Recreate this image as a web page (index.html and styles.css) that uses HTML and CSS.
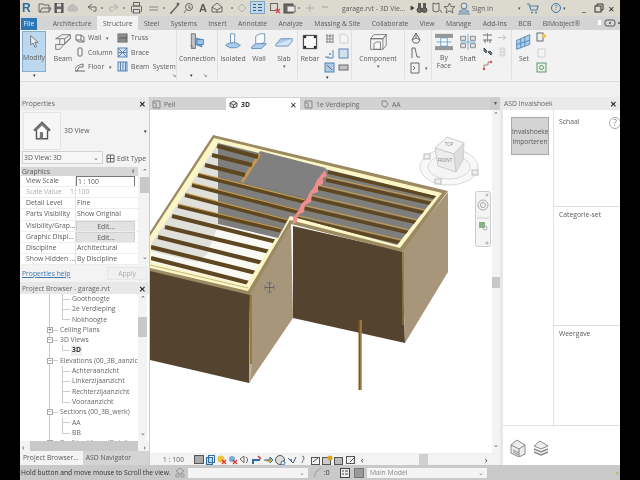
FILE: index.html
```html
<!DOCTYPE html>
<html lang="nl">
<head>
    <meta charset="UTF-8">
    <title>garage.rvt - 3D View</title>
    <link rel="stylesheet" href="styles.css">
</head>
<body>
    <div class="app">
        <!-- title bar -->
        <div class="titlebar">
            <span class="logo">R</span>
            <svg class="qat" width="306" height="16" viewBox="34 0 306 16">
                <path d="M39 4h4l1 1h5v7H39zM40 12l2-4h9l-2 4" class="i-line"/>
                <rect x="55" y="3.500" width="8" height="9" class="i-dark"/><rect x="57" y="3.500" width="4" height="3" fill="#ddd"/><rect x="57" y="9" width="4" height="3.500" fill="#ddd"/>
                <path d="M69 11a3 3 0 0 1 1-5 3.500 3.500 0 0 1 6 1c2 0 2 4 0 4z" class="i-soft"/>
                <path d="M92 4l-4 3 4 3M88 7h8v4h-3" class="i-line"/><circle cx="102" cy="8" r="1" fill="#777"/>
                <path d="M114 4l4 3-4 3M118 7h-8v4h3" class="i-soft-line"/><circle cx="124" cy="8" r="1" fill="#777"/>
                <rect x="131.500" y="6" width="10" height="6" rx="1" class="i-line"/><rect x="133.500" y="2.500" width="6" height="3.500" class="i-line"/><rect x="133.500" y="9.500" width="6" height="3.500" fill="#ddd" stroke="#555"/>
                <path d="M149 7h9M149 10h9" stroke="#999" stroke-width="1.400"/><circle cx="164" cy="8" r="1" fill="#777"/>
                <path d="M171 13l7-8" stroke="#555" stroke-width="1.500"/><circle cx="178" cy="4" r="1.500" fill="#555"/><circle cx="171" cy="13" r="1" fill="#555"/>
                <circle cx="189" cy="7" r="3.500" class="i-line"/><path d="M186 10l-2 3" class="i-line"/><path d="M189 5v3h2" class="i-line"/>
                <text class="qat-a" x="199" y="12">A</text>
                <path d="M212 7l5-4 5 4v5h-10z" class="i-line"/><path d="M212 7l5 3 5-3M217 10v3" class="i-line"/>
                <circle cx="232" cy="8" r="1" fill="#777"/>
                <path d="M242 4l4 4-4 4-4-4z" class="i-soft-line"/>
                <rect x="250.500" y="1.500" width="14" height="12" fill="#bcd8ef" stroke="#6a9cc8"/><path d="M253 4.500h3M253 7.500h3M253 10.500h3M258 4.500h4M258 7.500h4M258 10.500h4" stroke="#246"/>
                <rect x="270.500" y="3.500" width="7" height="7" class="i-line"/><path d="M276 9l4 4M280 9l-4 4" stroke="#d33" stroke-width="1.400"/>
                <rect x="284" y="4" width="9" height="9" class="i-dark"/><rect x="287" y="6" width="8" height="6" fill="#eee" stroke="#555"/>
                <circle cx="299" cy="8" r="1" fill="#777"/>
                <path d="M306 8h8M310 4v8" class="i-soft-line"/>
                <path d="M322 7h6" stroke="#999"/>
            </svg>
            <span class="title-text">garage.rvt - 3D Vie...</span>
            <svg class="qat" width="63" height="16" viewBox="409 0 63 16">
                <path d="M414 8l-3 2-0-4z" fill="#333" stroke="#333"/>
                <circle cx="419.500" cy="10" r="2.500" class="i-dark"/><circle cx="424.500" cy="10" r="2.500" class="i-dark"/><rect x="418" y="3" width="3" height="6" fill="#444"/><rect x="423" y="3" width="3" height="6" fill="#444"/>
                <path d="M433 3l3 1 3-1v8l-3 1-3-1zM440 10l2 3" class="i-line"/>
                <path d="M449.500 3l1.600 3.600h3.900l-3 2.600 1 3.800-3.500-2.200-3.500 2.200 1-3.800-3-2.600h3.900z" class="i-line"/>
                <circle cx="464" cy="6" r="3" fill="none" stroke="#3f72a8"/><path d="M459 12c1-3 9-3 10 0zM458 14h12" fill="none" stroke="#3f72a8"/>
            </svg>
            <span class="sign-in">Sign In</span>
            <span class="dot">▾</span>
            <svg class="qat" width="14" height="14" viewBox="0 0 14 14"><path d="M1 3h2l2 6h6l1-4H4" fill="none" stroke="#3f72a8" stroke-width="1.200"/><circle cx="6" cy="11.500" r="1" fill="#3f72a8"/><circle cx="10" cy="11.500" r="1" fill="#3f72a8"/></svg>
            <span class="help-round">?</span>
            <span class="dot">▾</span>
            <span class="win-btn">_</span>
            <svg class="restore" width="10" height="10" viewBox="0 0 10 10"><rect x="1" y="3" width="6" height="6" fill="none" stroke="#333"/><path d="M3 3V1h6v6H7" fill="none" stroke="#333"/></svg>
            <span class="win-x">✕</span>
        </div>

        <!-- ribbon tabs -->
        <div class="tabs">
            <span class="tab file">File</span>
            <span class="tab">Architecture</span>
            <span class="tab active">Structure</span>
            <span class="tab">Steel</span>
            <span class="tab">Systems</span>
            <span class="tab">Insert</span>
            <span class="tab">Annotate</span>
            <span class="tab">Analyze</span>
            <span class="tab">Massing &amp; Site</span>
            <span class="tab">Collaborate</span>
            <span class="tab">View</span>
            <span class="tab">Manage</span>
            <span class="tab">Add-Ins</span>
            <span class="tab">BCB</span>
            <span class="tab">BIMobject®</span>
            <svg class="tab-end" width="30" height="10" viewBox="0 0 30 10"><rect x="8" y="2" width="3" height="5" fill="#fff"/><rect x="15" y="2" width="10" height="6" rx="2" fill="none" stroke="#555"/><circle cx="20" cy="5" r="1" fill="#555"/><circle cx="29" cy="5" r="1" fill="#555"/></svg>
        </div>

        <!-- ribbon -->
        <div class="ribbon">
            <div class="panel p-modify">
                <div class="big modify">
                    <svg width="16" height="18" viewBox="0 0 16 18"><path d="M4 2v11l3-2 2 5 2-1-2-5h4z" fill="#eef4fa" stroke="#555"/></svg>
                    <span>Modify</span>
                </div>
                <span class="caret">▾</span>
            </div>
            <div class="panel p-structure">
                <div class="big w24">
                    <svg width="22" height="22" viewBox="0 0 22 22"><path d="M2 7l8-5h10l-7 5zM7 7v7M2 14h10l-5 6H2zM13 7v7l7-7V2M12 14l8-8" fill="#eaeaea" stroke="#555"/></svg>
                    <span>Beam</span>
                </div>
                <div class="small-col c-wall">
                    <div class="small"><svg width="10" height="10" viewBox="0 0 10 10"><path d="M1 2l5 0 3 2v5l-5 0-3-2z M6 2v5l-5 0M6 7l3 2" fill="#fff" stroke="#555"/></svg>Wall<i>▾</i></div>
                    <div class="small"><svg width="10" height="10" viewBox="0 0 10 10"><rect x="3" y="1" width="4" height="8" rx="1" fill="#fff" stroke="#555"/></svg>Column</div>
                    <div class="small"><svg width="10" height="10" viewBox="0 0 10 10"><path d="M0 9c0-4 3-6 8-7v3H4L2 9zM1 9h9" fill="#fff" stroke="#555"/></svg>Floor<i>▾</i></div>
                </div>
                <div class="small-col">
                    <div class="small"><svg width="11" height="10" viewBox="0 0 11 10"><rect x="1" y="1" width="9" height="8" fill="#aaa" stroke="#444"/><path d="M3 2v6M5 2v6M7 2v6M9 2v6M2 5h8" stroke="#333" stroke-width=".8"/></svg>Truss</div>
                    <div class="small"><svg width="11" height="11" viewBox="0 0 11 11"><rect x="1" y="1" width="9" height="9" fill="#cfe0ef" stroke="#3f72a8"/><path d="M1 1l9 9M10 1L1 10M1 5.500h9" stroke="#3f72a8"/></svg>Brace</div>
                    <div class="small"><svg width="11" height="11" viewBox="0 0 11 11"><rect x="1" y="1" width="9" height="9" fill="#cfe0ef" stroke="#3f72a8"/><path d="M3.500 1v9M6 1v9M8.500 1v9" stroke="#3f72a8"/></svg>Beam&nbsp; System</div>
                </div>
                <span class="corner">↘</span>
            </div>
            <div class="panel p-connection">
                <div class="big">
                    <svg width="22" height="22" viewBox="0 0 22 22"><rect x="4" y="1" width="5" height="18" fill="#bbb" stroke="#555"/><path d="M9 6l8 2v9l-8-3z" fill="#5b9fd4" stroke="#2f6da3"/><path d="M11 8h8v6h-8z" fill="#8abde6" stroke="#2f6da3"/><path d="M3 15l4 3" stroke="#555"/></svg>
                    <span>Connection</span>
                </div>
                <div class="caret-row"><span class="caret">▾</span><span class="corner-in">↘</span></div>
            </div>
            <div class="panel p-found">
                <div class="big w28">
                    <svg width="22" height="22" viewBox="0 0 22 22"><path d="M8 1h5v12H8z" fill="#fff" stroke="#3f72a8"/><path d="M2 15l5-3h8l5 3-5 3H7z" fill="#9cc7ea" stroke="#3f72a8"/></svg>
                    <span>Isolated</span>
                </div>
                <div class="big w22">
                    <svg width="22" height="22" viewBox="0 0 22 22"><path d="M7 4l5-3h6v10l-6 3H7z" fill="#fff" stroke="#3f72a8"/><path d="M2 17l5-4h13l-6 6H2z" fill="#9cc7ea" stroke="#3f72a8"/></svg>
                    <span>Wall</span>
                </div>
                <div class="big w26">
                    <svg width="22" height="22" viewBox="0 0 22 22"><path d="M1 14l6-7h14l-5 7z" fill="#9cc7ea" stroke="#3f72a8"/><path d="M1 14v2h15l5-6V7" fill="#cfe3f4" stroke="#3f72a8"/></svg>
                    <span>Slab</span>
                    <i class="under">▾</i>
                </div>
            </div>
            <div class="panel p-rebar">
                <div class="big w24">
                    <svg width="22" height="22" viewBox="0 0 22 22"><rect x="3" y="3" width="16" height="16" fill="#fff" stroke="#333" stroke-width="1.500"/><circle cx="5" cy="5" r="1.500"/><circle cx="17" cy="5" r="1.500"/><circle cx="5" cy="17" r="1.500"/><circle cx="17" cy="17" r="1.500"/></svg>
                    <span>Rebar</span>
                </div>
                <div class="icon-grid">
                    <svg width="11" height="11" viewBox="0 0 11 11"><path d="M2 3h7M2 6h7M2 9h7M3 1v9M6 1v9M9 1v9" stroke="#777"/></svg>
                    <svg width="11" height="11" viewBox="0 0 11 11"><path d="M2 1h5l3 3v6H2z" fill="#f5f5f5" stroke="#ccc"/></svg>
                    <svg width="11" height="11" viewBox="0 0 11 11"><path d="M1 9h4M9 2v8H3" fill="none" stroke="#3f72a8"/><circle cx="6" cy="6" r="1" fill="#3f72a8"/></svg>
                    <svg width="11" height="11" viewBox="0 0 11 11"><rect x="1" y="1" width="9" height="9" fill="#cfe0ef" stroke="#3f72a8"/></svg>
                    <svg width="11" height="11" viewBox="0 0 11 11"><rect x="1" y="1" width="9" height="9" fill="#9cc7ea" stroke="#3f72a8"/><path d="M3 3l5 5" stroke="#a33"/></svg>
                    <svg width="11" height="11" viewBox="0 0 11 11"><rect x="1" y="3" width="9" height="5" fill="#bbb" stroke="#555"/></svg>
                </div>
                <span class="caret caret-rebar">▾</span>
            </div>
            <div class="panel p-component">
                <div class="big">
                    <svg width="24" height="22" viewBox="0 0 24 22"><path d="M3 7l4-5h15l-4 5zM3 7h15v13H3zM18 7l4-5v13l-4 5M10 11h5v9H7V13z" fill="#f7f7f7" stroke="#555"/></svg>
                    <span>Component</span>
                    <i class="under">▾</i>
                </div>
            </div>
            <div class="panel p-model">
                <div class="small-col">
                    <svg width="12" height="12" viewBox="0 0 12 12"><path d="M6 1l4 7-2 3H4L2 8z M6 1v5l-4 2M6 6l4 2" fill="none" stroke="#555"/></svg>
                    <svg width="12" height="12" viewBox="0 0 12 12"><path d="M2 11V1h3l2 9h3" fill="none" stroke="#555"/></svg>
                    <div class="small tight"><svg width="11" height="12" viewBox="0 0 11 12"><path d="M1 1h8v10H1zM3 4l2 2-2 2" fill="none" stroke="#555"/></svg><i>▾</i></div>
                </div>
            </div>
            <div class="panel p-opening">
                <div class="big w24">
                    <svg width="24" height="22" viewBox="0 0 24 22"><rect x="1" y="1" width="22" height="5" fill="#888"/><rect x="1" y="16" width="22" height="5" fill="#888"/><path d="M8 6h8v10H8zM3 11h18" fill="#fff" stroke="#3f8fc8"/></svg>
                    <span class="two">By<br>Face</span>
                </div>
                <div class="big w22">
                    <svg width="22" height="22" viewBox="0 0 22 22"><path d="M2 4h6v5H2zM14 4h6v5h-6zM2 13h6v5H2zM14 13h6v5h-6z" fill="#ddd" stroke="#666"/><path d="M11 1v20M2 11h18" stroke="#3f8fc8"/></svg>
                    <span>Shaft</span>
                </div>
                <div class="small-col c-open">
                    <svg width="11" height="11" viewBox="0 0 11 11"><path d="M1 3h9M1 8h9M3 8v3M8 8v3" stroke="#555"/><path d="M5.500 1v9" stroke="#3f8fc8"/></svg>
                    <svg width="11" height="11" viewBox="0 0 11 11"><path d="M2 2l3 3-1 2-2-2zM6 6l3 3 1-2-2-2z" fill="#4a6a9a" stroke="#333"/></svg>
                    <svg width="11" height="11" viewBox="0 0 11 11"><path d="M2 9V5h4V2h3" fill="none" stroke="#a66"/><circle cx="2" cy="9" r="1.200" fill="#c33"/><circle cx="9" cy="2" r="1.200" fill="#c33"/></svg>
                </div>
                <div class="small-col faded">
                    <svg width="11" height="11" viewBox="0 0 11 11"><path d="M1 5.500h7M6 3l3 2.500L6 8" fill="none" stroke="#bbb"/></svg>
                    <svg width="11" height="11" viewBox="0 0 11 11"><path d="M2 3h7M2 6h7M2 9h7M4 1v10M7 1v10" stroke="#ccc"/></svg>
                </div>
            </div>
            <div class="panel p-set">
                <div class="big w24">
                    <svg width="22" height="22" viewBox="0 0 22 22"><path d="M2 9l16-7v12L2 20z" fill="#9cc7ea" stroke="#2f6da3"/><path d="M7 7v11M12 5v11M2 14l16-5" stroke="#2f6da3"/></svg>
                    <span>Set</span>
                </div>
                <div class="small-col">
                    <svg width="11" height="12" viewBox="0 0 11 12"><rect x="1" y="1" width="6" height="8" fill="#eee" stroke="#555"/><circle cx="8" cy="4" r="2" fill="#f0c020"/></svg>
                    <svg width="11" height="12" viewBox="0 0 11 12"><path d="M2 2h7v8H2z" fill="#f5f5f5" stroke="#ccc"/></svg>
                    <svg width="11" height="12" viewBox="0 0 11 12"><rect x="1" y="1" width="9" height="9" fill="#e4efe4" stroke="#4a8a5a"/><circle cx="5.500" cy="5.500" r="2" fill="none" stroke="#4a8a5a"/></svg>
                </div>
            </div>
        </div>
        <div class="options"></div>

        <div class="main">
            <!-- left column -->
            <div class="left">
                <div class="dock-head"><span>Properties</span><b>✕</b></div>
                <div class="type-box">
                    <div class="type-thumb">
                        <svg width="22" height="22" viewBox="0 0 20 20"><path d="M3 9l7-7 7 7-2 1v7H5v-7z" fill="#fff" stroke="#555" stroke-width="1.300"/><path d="M10 2l7 7-2 1-5-5-5 5-2-1z" fill="#777"/><rect x="8" y="11" width="3" height="6" fill="#777"/></svg>
                    </div>
                    <span>3D View</span>
                    <i>▾</i>
                </div>
                <div class="instance-row">
                    <div class="select-box"><span>3D View: 3D</span><i>⌄</i></div>
                    <div class="edit-type">
                        <svg width="9" height="9" viewBox="0 0 9 9"><path d="M1 1h7v7H1zM1 4.500h7M4.500 1v7" fill="none" stroke="#666"/></svg>
                        <span>Edit Type</span>
                    </div>
                </div>
                <div class="props">
                    <div class="props-table">
                        <div class="props-group">Graphics<i>⇞</i></div>
                        <div class="prop"><span>View Scale</span><span class="input">1 : 100</span></div>
                        <div class="prop off"><span>Scale Value</span><span><em>1:</em>100</span></div>
                        <div class="prop"><span>Detail Level</span><span>Fine</span></div>
                        <div class="prop"><span>Parts Visibility</span><span>Show Original</span></div>
                        <div class="prop"><span>Visibility/Grap...</span><span class="edit">Edit...</span></div>
                        <div class="prop"><span>Graphic Displ...</span><span class="edit">Edit...</span></div>
                        <div class="prop"><span>Discipline</span><span>Architectural</span></div>
                        <div class="prop"><span>Show Hidden ...</span><span>By Discipline</span></div>
                    </div>
                    <div class="vscroll v-props"><span>⌃</span><b></b><span class="end">⌄</span></div>
                </div>
                <div class="help-row"><a href="#">Properties help</a><button class="apply">Apply</button></div>

                <div class="dock-head browser-head"><span>Project Browser - garage.rvt</span><b>✕</b></div>
                <div class="browser">
                    <div class="tree">
                        <div class="row lv2">Goothoogte</div>
                        <div class="row lv2">2e Verdieping</div>
                        <div class="row lv2 last">Nokhoogte</div>
                        <div class="row lv1"><i class="node">+</i>Ceiling Plans</div>
                        <div class="row lv1"><i class="node">−</i>3D Views</div>
                        <div class="row lv2 last"><b>3D</b></div>
                        <div class="row lv1"><i class="node">−</i>Elevations (00_3B_aanzic</div>
                        <div class="row lv2">Achteraanzicht</div>
                        <div class="row lv2">Linkerzijaanzicht</div>
                        <div class="row lv2">Rechterzijaanzicht</div>
                        <div class="row lv2 last">Vooraanzicht</div>
                        <div class="row lv1"><i class="node">−</i>Sections (00_3B_werk)</div>
                        <div class="row lv2">AA</div>
                        <div class="row lv2 last">BB</div>
                        <div class="row lv1 cut"><i class="node">+</i>Drafting Views (Detail</div>
                    </div>
                    <div class="vscroll v-tree"><span>⌃</span><b></b><span class="end">⌄</span></div>
                </div>
                <div class="hscroll"><span>‹</span><b></b><span>›</span></div>
                <div class="dock-tabs"><span class="on">Project Browser...</span><span>ASD Navigator</span></div>
            </div>

            <!-- middle column -->
            <div class="center">
                <div class="view-tabs">
                    <div class="vtab t1"><svg width="9" height="9" viewBox="0 0 9 9"><path d="M1 1h7v7H1zM1 3h3v5" fill="none" stroke="#888"/></svg>Peil</div>
                    <div class="vtab t2 on"><svg width="9" height="9" viewBox="0 0 9 9"><path d="M4.500 1l3.500 2v3.500L4.500 8 1 6.500V3z" fill="#ddd" stroke="#555"/><path d="M1 3l3.500 2L8 3M4.500 5v3" stroke="#555" fill="none"/></svg><b>3D</b><i>✕</i></div>
                    <div class="vtab t3"><svg width="9" height="9" viewBox="0 0 9 9"><path d="M1 1h7v7H1zM1 3h3v5" fill="none" stroke="#888"/></svg>1e Verdieping</div>
                    <div class="vtab t4"><svg width="9" height="9" viewBox="0 0 9 9"><path d="M2 1h4l2 3-2 3H4L2 5z" fill="none" stroke="#888"/></svg>AA</div>
                    <div class="vtab-menu">▾</div>
                </div>
                <div class="view">
                    <svg class="model" width="342" height="343" viewBox="150 110 342 343">
                        <defs>
                            <clipPath id="roof-inside"><polygon points="218,143 436,196 397,245 290,216 246,285 151,262 151,244"/></clipPath>
                        </defs>
                        <!-- walls -->
                        <polygon class="w-dark" points="150,265 250,292 249,383 150,360"/>
                        <polygon class="w-tan" points="250,292 291,222 293,318 249,383"/>
                        <polygon class="w-dark" points="293,226 402,251 405,343 293,318"/>
                        <polygon class="w-tan" points="402,250 448,192 448,272 405,343"/>
                        <line class="w-edge" x1="251" y1="295" x2="251" y2="364"/>
                        <line class="w-edge" x1="403" y1="252" x2="403" y2="325"/>
                        <polygon class="w-light" points="249,364 252,364 250,383 249,383"/>
                        <!-- column -->
                        <line class="post" x1="360" y1="320" x2="360" y2="390"/>
                        <line class="post-light" x1="361" y1="320" x2="361" y2="390"/>

                        <!-- roof plate -->
                        <polygon class="rim" points="213,135 448,191 402,252 291,224 250,295 150,271 150,232"/>
                        <polygon class="cream" points="214,138 442,193 400,248 290,220 248,291 150,268 150,236"/>
                        <line class="cream-line" x1="150" y1="265" x2="248" y2="288"/>
                        <polygon class="inside" points="218,143 436,196 397,245 290,216 246,285 151,262 151,244"/>
                        <polygon class="light-gray" points="218,143 218,226 207,254 197,262 151,251 151,244"/>
                        <polygon class="gray" points="218,143 436,196 397,245 290,216 278,238 218,224"/>
                        <polygon class="gray-flat" points="260,151 326,168 309,198 241,181"/>
                        <line class="trim" x1="260" y1="154" x2="242" y2="182"/>

                        <g clip-path="url(#roof-inside)">
                            <!-- joists, left bay -->
                            <g class="joists joists-left">
                                <line x1="217" y1="146" x2="258" y2="157"/>
                                <line x1="212" y1="155" x2="252" y2="165"/>
                                <line x1="205" y1="165" x2="245" y2="175"/>
                                <line x1="198" y1="175" x2="305" y2="202"/>
                                <line x1="192" y1="185" x2="298" y2="212"/>
                                <line x1="185" y1="195" x2="292" y2="223"/>
                                <line x1="178" y1="206" x2="282" y2="231"/>
                                <line x1="172" y1="216" x2="277" y2="242"/>
                                <line x1="165" y1="227" x2="270" y2="252"/>
                                <line x1="158" y1="237" x2="263" y2="263"/>
                                <line x1="151" y1="247" x2="256" y2="273"/>
                                <line x1="151" y1="258" x2="249" y2="283"/>
                            </g>
                            <g class="joist-tops">
                                <line x1="198" y1="173" x2="305" y2="200"/>
                                <line x1="192" y1="183" x2="298" y2="210"/>
                                <line x1="185" y1="193" x2="292" y2="221"/>
                                <line x1="178" y1="204" x2="282" y2="229"/>
                            </g>
                            <!-- joists, right bay -->
                            <g class="joists">
                                <line x1="328" y1="172" x2="438" y2="198"/>
                                <line x1="326" y1="180" x2="433" y2="204"/>
                                <line x1="318" y1="188" x2="425" y2="213"/>
                                <line x1="310" y1="198" x2="418" y2="223"/>
                                <line x1="303" y1="208" x2="410" y2="233"/>
                                <line x1="295" y1="218" x2="402" y2="243"/>
                            </g>
                            <g class="joist-tops">
                                <line x1="326" y1="177" x2="433" y2="201"/>
                                <line x1="318" y1="185" x2="425" y2="210"/>
                                <line x1="310" y1="195" x2="418" y2="220"/>
                                <line x1="303" y1="205" x2="410" y2="230"/>
                                <line x1="295" y1="215" x2="402" y2="240"/>
                            </g>
                        </g>
                        <polygon class="pink" points="325,170 327,176 323,178 323,184 318,186 318,192 312,194 311,202 305,205 304,212 298,215 297,222 293,224 293,218 298,211 302,203 306,200 310,192 314,187 317,180 321,175"/>

                        <!-- cursor -->
                        <path class="cursor" d="M269.500 282v11M264 287.500h11M269.500 281l-2 2h4zM269.500 294l-2-2h4zM263 287.500l2-2v4zM276 287.500l-2-2v4z"/>

                        <!-- view cube -->
                        <ellipse class="cube-ring" cx="449" cy="167" rx="29" ry="18"/>
                        <ellipse class="cube-ring" cx="449" cy="167" rx="21" ry="12"/>
                        <polygon class="cube-top" points="435,148 447,137 464,143 454,154"/>
                        <polygon class="cube-front" points="435,148 454,154 456,172 438,166"/>
                        <polygon class="cube-right" points="454,154 464,143 463,160 456,172"/>
                        <text class="cube-text" x="449" y="146">TOP</text>
                        <text class="cube-text" x="445" y="162">FRONT</text>
                        <rect class="cube-tag" x="424" y="154" width="6" height="5"/>
                        <rect class="cube-tag" x="472" y="170" width="6" height="5"/>
                        <rect class="cube-tag" x="435" y="179" width="6" height="5"/>

                        <!-- navigation bar -->
                        <rect class="nav" x="475.500" y="191.500" width="15" height="55" rx="2"/>
                        <circle class="nav-ring" cx="483" cy="205" r="5"/>
                        <circle class="nav-ring" cx="483" cy="205" r="2.500"/>
                        <line class="nav-line" x1="477" y1="218" x2="489" y2="218"/>
                        <rect x="479" y="222" width="6" height="6" fill="#8ab08a"/>
                        <circle class="nav-ring" cx="485" cy="228" r="2"/>
                        <circle class="nav-dot" cx="487" cy="195" r="1.500"/>
                        <circle class="nav-dot" cx="487" cy="243" r="1.500"/>
                    </svg>
                    <div class="vscroll v-view"><span>⌃</span><b></b><span class="end">⌄</span></div>
                </div>
                <div class="view-bar">
                    <span class="scale">1 : 100</span>
                    <svg width="165" height="12" viewBox="193 0 165 12">
                        <rect x="194.500" y="1.500" width="9" height="8" fill="#aaa" stroke="#555"/>
                        <rect x="206.500" y="3.500" width="6" height="7" fill="#bcd8ef" stroke="#2f6da3"/><rect x="208.500" y="1.500" width="6" height="7" fill="none" stroke="#2f6da3"/>
                        <circle cx="221" cy="5" r="3.500" fill="#f0c040"/><path d="M222 6l4 4M226 6l-4 4" stroke="#d33" stroke-width="1.200"/>
                        <circle cx="232" cy="5" r="3" fill="#7aa8d0"/><path d="M233 6l4 4M237 6l-4 4" stroke="#d33" stroke-width="1.200"/>
                        <path d="M240 5l4-3v7zM246 3c2 1 2 5 0 6" fill="none" stroke="#666"/>
                        <path d="M252 5h8v2h-6v3h-2z" fill="#2f6da3"/><path d="M258 2l3 3" stroke="#c33" stroke-width="1.400"/>
                        <path d="M264 6h6V3l3 3-3 3" fill="#e0b040" stroke="#2f6da3"/>
                        <circle cx="280" cy="6" r="4.500" fill="#ddd" stroke="#555"/><circle cx="283" cy="9" r="2" fill="#fff" stroke="#2f6da3"/>
                        <path d="M288 4l5 5 3-6" fill="none" stroke="#555"/><circle cx="291" cy="6" r="1" fill="#2f6da3"/>
                        <path d="M302 2a2 2 0 0 1 2 2c0 2-2 3-2 5" fill="none" stroke="#666"/>
                        <rect x="311.500" y="3.500" width="8" height="7" fill="none" stroke="#555"/><path d="M313 8l5-4" stroke="#555"/>
                        <rect x="322.500" y="3.500" width="8" height="7" fill="#ccc" stroke="#555"/><circle cx="330" cy="4" r="2.500" fill="#e0a020"/>
                        <rect x="334.500" y="3.500" width="8" height="7" fill="#bbb" stroke="#555"/>
                        <rect x="346.500" y="2.500" width="8" height="7" fill="none" stroke="#555"/><path d="M350 8l4-4" stroke="#555"/>
                    </svg>
                    <span class="arrow">‹</span>
                    <div class="bar-track"><b></b></div>
                    <span class="arrow">›</span>
                </div>
            </div>

            <!-- right column -->
            <div class="right">
                <div class="dock-head"><span>ASD Invalshoek</span><b>✕</b></div>
                <div class="addin">
                    <div class="addin-left">
                        <div class="import-btn">Invalshoeke<br>importeren</div>
                    </div>
                    <div class="addin-right">
                        <div class="addin-sec s1"><span>Schaal</span><i class="q">?</i></div>
                        <div class="addin-sec s2"><span>Categorie-set</span></div>
                        <div class="addin-sec s3"><span>Weergave</span></div>
                    </div>
                </div>
                <div class="addin-foot">
                    <svg width="16" height="18" viewBox="0 0 16 18"><path d="M1 6l6-5 8 5v9l-6 3-8-4z" fill="#eee" stroke="#888"/><path d="M1 6l8 4 6-4M9 10v8M3 11l6 3M3 13l6 3" fill="none" stroke="#888"/></svg>
                    <svg width="16" height="18" viewBox="0 0 16 18"><path d="M1 7l6-5 8 5-7 3z" fill="#eee" stroke="#888"/><path d="M1 10l7 3 7-3M1 13l7 3 7-3" fill="none" stroke="#888" stroke-width="1.400"/></svg>
                </div>
            </div>
        </div>

        <!-- status bar -->
        <div class="status">
            <span class="status-text">Hold button and move mouse to Scroll the view.</span>
            <svg width="10" height="11" viewBox="0 0 10 11"><path d="M5 1l4 3-4 3-4-3zM1 7h3v3H1zM6 7h3v3H6z" fill="none" stroke="#999"/></svg>
            <div class="status-select sel-a"><i>⌄</i></div>
            <svg class="st-icon" width="10" height="11" viewBox="0 0 10 11"><path d="M1 10l2-5 5-4" fill="none" stroke="#aaa" stroke-width="1.400"/></svg>
            <span class="zero">:0</span>
            <svg class="st-icon2" width="10" height="10" viewBox="0 0 10 10"><rect x=".5" y=".5" width="9" height="9" fill="#eee" stroke="#444"/><path d="M2 3h2M2 6h2M5 3h3M5 6h3" stroke="#444"/></svg>
            <svg width="10" height="10" viewBox="0 0 10 10"><rect x=".5" y=".5" width="9" height="9" fill="#999" stroke="#777"/></svg>
            <div class="status-select sel-b"><span>Main Model</span><i>⌄</i></div>
            <span class="filter">▾</span>
        </div>
    </div>
</body>
</html>
```

FILE: styles.css
```css
* {
    margin: 0;
    padding: 0;
    box-sizing: border-box;
}

body {
    background: #000;
    width: 640px;
    height: 480px;
    overflow: hidden;
    font-family: 'Open Sans', sans-serif;
    font-size: 6.8px;
    color: #5a5a5a;
}

i, em {
    font-style: normal;
}

.app {
    width: 600px;
    height: 480px;
    margin-left: 20px;
    display: flex;
    flex-direction: column;
    background: #f0f0f0;
    filter: blur(0.4px);
    overflow: hidden;
}

/* title bar */
.titlebar {
    height: 16px;
    background: #dcd9cf;
    display: flex;
    align-items: center;
    padding-left: 2px;
    white-space: nowrap;
}

.logo {
    font-family: 'Liberation Sans', sans-serif;
    font-weight: bold;
    font-size: 12px;
    color: #2a6ca3;
    width: 12px;
}

.qat {
    flex: none;
    opacity: 0.85;
}

.qat-a {
    font-family: 'Liberation Sans', sans-serif;
    font-weight: bold;
    font-size: 11px;
    fill: #444;
}

.i-line {
    fill: none;
    stroke: #555;
}

.i-dark {
    fill: #555;
    stroke: #333;
}

.i-soft {
    fill: #bbb;
    stroke: #aaa;
}

.i-soft-line {
    fill: none;
    stroke: #aaa;
}

.title-text {
    margin-left: 2px;
    width: 67px;
}

.sign-in {
    width: 46px;
}

.dot {
    font-size: 5px;
    width: 8px;
}

.help-round {
    width: 10px;
    height: 10px;
    margin: 0 2px 0 11px;
    border: 1px solid #3f72a8;
    border-radius: 50%;
    color: #3f72a8;
    text-align: center;
    font-size: 7px;
    line-height: 8px;
}

.win-btn {
    margin-left: 11px;
    width: 12px;
    font-size: 9px;
    font-weight: bold;
    color: #333;
    line-height: 8px;
}

.restore {
    width: 10px;
    margin-right: 4px;
}

.win-x {
    font-size: 8px;
    color: #222;
}

/* ribbon tabs */
.tabs {
    height: 14px;
    background: #d4d4d4;
    display: flex;
    align-items: stretch;
    padding-left: 1px;
    white-space: nowrap;
}

.tab {
    padding: 0 5.7px;
    line-height: 15px;
}

.tab.file {
    width: 16px;
    padding: 0;
    margin: 2px 10px 0 0;
    background: #2a78b8;
    color: #eaf2f8;
    text-align: center;
    line-height: 11px;
}

.tab.active {
    background: #f2f2f2;
}

.tab-end {
    margin: 2px 0 0 4px;
}

/* ribbon */
.ribbon {
    height: 52px;
    padding-left: 2px;
    display: flex;
    background: #f2f2f2;
    border-bottom: 1px solid #ddd;
    white-space: nowrap;
}

.ribbon svg {
    opacity: 0.85;
}

.panel {
    display: flex;
    flex: none;
    height: 49px;
    border-right: 1px solid #e0e0e0;
    position: relative;
    padding-top: 1px;
}

.p-modify { width: 27px; flex-direction: column; border: 0; }
.p-structure { width: 128px; padding-left: 2px; }
.p-connection { width: 41px; flex-direction: column; }
.p-found { width: 80px; padding-left: 1px; }
.p-rebar { width: 54px; }
.p-component { width: 53px; }
.p-model { width: 27px; padding-left: 5px; }
.p-opening { width: 80px; }
.p-set { width: 44px; border: 0; }

.big {
    display: flex;
    flex-direction: column;
    align-items: center;
    text-align: center;
    padding-top: 2px;
}

.big svg {
    height: 18px;
    flex: none;
}

.big span {
    margin-top: 2.5px;
    line-height: 9px;
}

.big .two {
    line-height: 8.8px;
}

.big .under {
    font-size: 5px;
    line-height: 6px;
}

.w22 { width: 22px; margin-left: 1px; }
.w24 { width: 24px; }
.w26 { width: 26px; margin-left: 1px; }
.w28 { width: 28px; }

.modify {
    width: 24px;
    height: 41px;
    background: #bcd8ef;
    border: 1px solid #83aed2;
}

.modify svg {
    height: 15px;
    margin-bottom: 1px;
}

.p-connection .big,
.p-component .big {
    width: 100%;
}

.caret {
    font-size: 5px;
    color: #333;
    text-align: center;
    line-height: 7px;
    width: 24px;
}

.caret-rebar {
    align-self: flex-end;
    margin-bottom: -2px;
    margin-left: -26px;
    width: 8px;
}

.caret-row {
    display: flex;
    margin-top: auto;
    justify-content: center;
    gap: 8px;
}

.caret-row .caret {
    width: 8px;
}

.corner {
    position: absolute;
    right: 0;
    bottom: 1px;
    font-size: 5px;
}

.corner-in {
    font-size: 5px;
    line-height: 7px;
}

.small-col {
    display: flex;
    flex-direction: column;
    gap: 3px;
    padding-top: 1px;
}

.c-open {
    margin-left: 3px;
}

.faded {
    margin-left: 4px;
}

.c-wall {
    width: 42px;
}

.small {
    display: flex;
    align-items: center;
    gap: 3px;
    height: 11.5px;
}

.small.tight {
    gap: 2px;
}

.small i {
    font-size: 5px;
    margin-left: 2px;
}

.icon-grid {
    display: grid;
    grid-template-columns: 11px 11px;
    grid-auto-rows: 14.5px;
    column-gap: 3px;
    padding: 2px 0 0 2px;
}

.options {
    height: 15px;
    background: #f1f1f1;
}

/* main area */
.main {
    flex: 1;
    min-height: 0;
    display: flex;
    background: #c9c9c9;
}

.dock-head {
    height: 13px;
    padding: 0 3px 0 2px;
    display: flex;
    justify-content: space-between;
    align-items: center;
    background: #eaeaea;
    color: #666;
    flex: none;
}

.dock-head b {
    font-size: 8px;
    color: #222;
}

.left {
    width: 130px;
    display: flex;
    flex-direction: column;
    background: #f3f3f3;
    border-right: 1px solid #ccc;
}

.type-box {
    height: 40px;
    display: flex;
    align-items: center;
    padding: 1px 2px 0 3px;
    flex: none;
}

.type-thumb {
    width: 38px;
    height: 38px;
    background: #f6f6f6;
    border: 1px solid #e4e4e4;
    display: flex;
    align-items: center;
    justify-content: center;
    margin-right: 3px;
}

.type-box span {
    flex: 1;
}

.type-box i {
    font-size: 5px;
    color: #222;
}

.instance-row {
    height: 15px;
    display: flex;
    padding: 1px 0 0 2px;
    flex: none;
}

.select-box {
    width: 81px;
    height: 13px;
    background: #f6f6f6;
    border: 1px solid #d2d2d2;
    display: flex;
    justify-content: space-between;
    align-items: center;
    padding: 0 3px 0 1px;
}

.select-box i {
    line-height: 4px;
    font-size: 7px;
}

.edit-type {
    display: flex;
    align-items: center;
    gap: 2px;
    margin-left: 3px;
}

.props {
    flex: none;
    height: 100px;
    display: flex;
    padding-top: 2px;
}

.props-table {
    width: 117px;
    margin-left: 1px;
    background: #fff;
}

.props-group {
    height: 9px;
    background: #d6d6d6;
    display: flex;
    justify-content: space-between;
    padding: 0 3px 0 1px;
    line-height: 9px;
}

.props-group i {
    font-size: 5px;
}

.prop {
    height: 11.15px;
    display: grid;
    grid-template-columns: 55px 1fr;
    line-height: 10.5px;
    border-bottom: 1px solid #eee;
    white-space: nowrap;
    overflow: hidden;
}

.prop span:first-child {
    padding-left: 5px;
    border-right: 1px solid #e4e4e4;
}

.prop span:last-child {
    padding-left: 1px;
}

.prop .input {
    background: #fff;
    border: 1px solid #777;
    margin-right: 3px;
    padding-left: 3px;
    line-height: 9px;
}

.prop .edit {
    background: #e2e2e2;
    border: 1px solid #d0d0d0;
    margin: 0 3px 0 0;
    text-align: center;
    line-height: 9px;
}

.prop.off {
    color: #aaa;
}

.prop.off em {
    margin-left: -7px;
    margin-right: 2px;
}

.vscroll {
    display: flex;
    flex-direction: column;
    align-items: center;
    background: #f3f3f3;
    font-size: 7px;
    color: #555;
    flex: none;
}

.vscroll span {
    line-height: 10px;
    height: 10px;
}

.vscroll b {
    width: 100%;
    background: #c8c8c8;
}

.vscroll .end {
    margin-top: auto;
    line-height: 4px;
}

.v-props {
    width: 9px;
    margin-left: 2px;
}

.v-props b {
    height: 16px;
}

.help-row {
    flex: none;
    height: 17px;
    display: flex;
    justify-content: space-between;
    align-items: center;
    padding: 0 2px;
}

.help-row a {
    color: #3e78b5;
}

.apply {
    width: 40px;
    height: 13px;
    background: #f0f0f0;
    border: 1px solid #e6e6e6;
    color: #aaa;
    font-family: inherit;
    font-size: 6.8px;
}

.browser-head {
    height: 12px;
    background: #e8e8e8;
}

.browser {
    flex: 1;
    min-height: 0;
    display: flex;
    background: #fff;
    overflow: hidden;
}

.tree {
    flex: 1;
    overflow: hidden;
    color: #666;
}

.row {
    height: 10.3px;
    line-height: 10.3px;
    display: flex;
    align-items: center;
    white-space: nowrap;
    background-repeat: no-repeat;
}

.lv1 {
    padding-left: 40px;
    background-image: linear-gradient(#ccc, #ccc), linear-gradient(#ccc, #ccc);
    background-position: 29px 0, 29px 50%;
    background-size: 1px 100%, 9px 1px;
}

.lv2 {
    padding-left: 52px;
    background-image: linear-gradient(#ccc, #ccc), linear-gradient(#ccc, #ccc), linear-gradient(#ccc, #ccc);
    background-position: 29px 0, 42px 0, 42px 50%;
    background-size: 1px 100%, 1px 100%, 8px 1px;
}

.lv2.last {
    background-size: 1px 100%, 1px 50%, 8px 1px;
}

.lv2 b {
    background: #eee;
    color: #333;
    padding: 0 1px;
    margin-left: -1px;
}

.node {
    width: 6px;
    height: 6px;
    margin: 0 7px 0 -13px;
    border: 1px solid #aaa;
    background: #fff;
    font-size: 6px;
    line-height: 4px;
    text-align: center;
    color: #333;
    flex: none;
}

.cut {
    color: #888;
}

.v-tree {
    width: 9px;
    margin-right: 2px;
}

.v-tree b {
    height: 20px;
    margin-top: 13px;
}

.hscroll {
    flex: none;
    height: 10px;
    background: #f3f3f3;
    display: flex;
    align-items: center;
    padding: 0 3px 0 2px;
    font-size: 8px;
    color: #333;
}

.hscroll b {
    flex: 1;
    height: 100%;
    background: #c8c8c8;
    margin: 0 6px;
}

.dock-tabs {
    flex: none;
    height: 14px;
    display: flex;
    background: #d4d4d4;
    line-height: 13px;
}

.dock-tabs span {
    padding: 0 4px 0 3px;
}

.dock-tabs .on {
    background: #f3f3f3;
}

/* middle column */
.center {
    width: 350px;
    display: flex;
    flex-direction: column;
}

.view-tabs {
    flex: none;
    height: 13px;
    display: flex;
    background: #d2d2d2;
    padding-top: 1px;
}

.vtab {
    display: flex;
    align-items: center;
    gap: 3px;
    padding-left: 2px;
    color: #666;
}

.vtab svg {
    flex: none;
}

.t1 { width: 76px; }
.t2 { width: 74px; padding-left: 3px; background: #fff; color: #333; }
.t2 i { margin-left: auto; margin-right: 3px; font-size: 8px; color: #222; }
.t3 { width: 76px; padding-left: 4px; }
.t4 { flex: 1; padding-left: 4px; }

.vtab-menu {
    width: 10px;
    font-size: 6px;
    line-height: 11px;
    text-align: center;
    background: #ccc;
}

.view {
    flex: 1;
    min-height: 0;
    display: flex;
    background: #fff;
}

.model {
    display: block;
    flex: none;
}

.w-dark { fill: #54442f; }
.w-tan { fill: #a8967a; }
.w-light { fill: #b9b19a; }

.w-edge {
    stroke: #8c7434;
    stroke-width: 1.5;
}

.post {
    stroke: #7a5a28;
    stroke-width: 3;
}

.post-light {
    stroke: #c09a50;
    stroke-width: 1;
}

.rim { fill: #9b8a62; }
.cream { fill: #fbf6c6; }
.inside { fill: #f9f9f4; }
.light-gray { fill: #dfe0da; }
.gray { fill: #7e7f7c; }
.gray-flat { fill: #7f807f; }

.cream-line {
    stroke: #b7a876;
    stroke-width: 0.8;
}

.trim {
    stroke: #c39a4f;
    stroke-width: 3;
}

.joists line {
    stroke: #5d4620;
    stroke-width: 3.4;
}

.joists-left line {
    stroke-width: 4.2;
}

.joist-tops line {
    stroke: #c99c4c;
    stroke-width: 1.1;
}

.pink { fill: #ef8d8f; }

.cursor {
    fill: #fff;
    stroke: #555;
    stroke-width: 0.7;
}

.cube-ring {
    fill: #f4f4f4;
    fill-opacity: 0.6;
    stroke: #d8d8d8;
}

.cube-top { fill: #f4f4f4; stroke: #ccc; }
.cube-front { fill: #ececec; stroke: #ccc; }
.cube-right { fill: #dedede; stroke: #ccc; }

.cube-text {
    font-size: 4.5px;
    text-anchor: middle;
    fill: #888;
}

.cube-tag {
    fill: #eee;
    stroke: #bbb;
}

.nav {
    fill: #f4f4f4;
    stroke: #ccc;
}

.nav-ring {
    fill: none;
    stroke: #aaa;
}

.nav-line {
    stroke: #ccc;
}

.nav-dot {
    fill: #bbb;
}

.v-view {
    width: 8px;
}

.v-view b {
    height: 11px;
    margin-top: 157px;
}

.view-bar {
    flex: none;
    height: 12px;
    display: flex;
    align-items: center;
    background: #f3f3f3;
    border-top: 1px solid #eee;
}

.scale {
    margin-left: 13px;
    width: 30px;
    font-size: 6.4px;
    letter-spacing: .2px;
}

.arrow {
    font-size: 9px;
    color: #333;
    width: 8px;
    text-align: center;
    line-height: 10px;
}

.bar-track {
    width: 116px;
    height: 100%;
    padding-left: 53px;
}

.bar-track b {
    display: block;
    width: 9px;
    height: 100%;
    background: #d0d0d0;
}

/* right column */
.right {
    width: 120px;
    display: flex;
    flex-direction: column;
    background: #fff;
    border-left: 3px solid #e8e8e8;
}

.right .dock-head {
    padding-left: 1px;
}

.addin {
    flex: 1;
    min-height: 0;
    display: flex;
}

.addin-left {
    width: 53px;
    padding: 7px 0 0 8px;
    border-bottom: 1px solid #e4e4e4;
    margin-bottom: 2px;
    margin-right: -3px;
}

.import-btn {
    width: 38px;
    height: 38px;
    padding-top: 9px;
    background: #d4d4d4;
    border: 1px solid #aaa;
    font-size: 6.6px;
    line-height: 9.5px;
    text-align: center;
    overflow: hidden;
    white-space: nowrap;
}

.addin-right {
    flex: 1;
    display: flex;
    flex-direction: column;
    border-left: 1px solid #e4e4e4;
}

.addin-sec {
    display: flex;
    justify-content: space-between;
    padding: 3px 0 0 5px;
    border-bottom: 1px solid #ddd;
}

.s1 { height: 98px; padding-top: 7px; }
.s2 { height: 119px; }
.s3 { height: 101px; margin-bottom: 2px; }

.q {
    width: 12px;
    height: 12px;
    margin-right: -1px;
    border: 1px solid #aaa;
    border-radius: 50%;
    font-size: 9px;
    line-height: 10px;
    text-align: center;
    color: #888;
}

.addin-foot {
    flex: none;
    height: 37px;
    padding: 11px 0 0 7px;
    display: flex;
    gap: 7px;
    align-items: flex-start;
}

/* status bar */
.status {
    flex: none;
    height: 15px;
    display: flex;
    align-items: center;
    background: #c9c9c9;
    padding-left: 1px;
    white-space: nowrap;
}

.status-text {
    width: 154px;
    font-size: 6.7px;
    color: #333;
}

.status-select {
    height: 10px;
    background: #f4f4f4;
    display: flex;
    justify-content: space-between;
    align-items: center;
    padding: 0 3px;
    color: #888;
}

.status-select i {
    line-height: 3px;
    font-size: 7px;
}

.sel-a {
    width: 120px;
    margin-left: 3px;
    justify-content: flex-end;
}

.sel-b {
    width: 120px;
    margin-left: 3px;
}

.st-icon {
    margin-left: 5px;
}

.zero {
    margin-left: 1px;
    width: 16px;
    color: #333;
}

.st-icon2 {
    margin-right: 4px;
}

.filter {
    margin-left: auto;
    margin-right: 1px;
    font-size: 5px;
    color: #c9a820;
}
```
